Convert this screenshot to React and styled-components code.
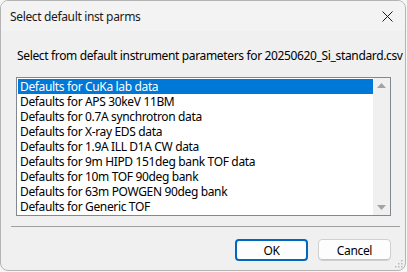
import React from "react";
import styled, { createGlobalStyle } from "styled-components";

const Global = createGlobalStyle`
  html, body { margin: 0; padding: 0; background: #f6f6f6; }
  body { font-family: "Segoe UI", "Noto Sans", "Open Sans", sans-serif; letter-spacing: -0.35px; }
`;

const Window = styled.div`
  box-sizing: border-box;
  width: 406px;
  height: 271px;
  border: 1px solid #b4b4b4;
  border-radius: 8px;
  overflow: hidden;
  background: #f0f0f0;
  display: flex;
  flex-direction: column;
  position: relative;
`;

const TitleBar = styled.div`
  height: 30px;
  flex: none;
  background: #f3f3f3;
  display: flex;
  align-items: center;
  justify-content: space-between;
  padding: 0 9px 0 9px;
  font-size: 12px;
  color: #1a1a1a;
`;

const Close = styled.div`
  width: 14px;
  height: 14px;
  display: flex;
  align-items: center;
  justify-content: center;
  margin-right: 2px;
`;

const Body = styled.div`
  flex: 1;
  display: flex;
  flex-direction: column;
  padding: 0 14px 0 15px;
`;

const Label = styled.div`
  margin-top: 17px;
  line-height: 16px;
  height: 16px;
  font-size: 12px;
  color: #000;
  padding-left: 1px;
  white-space: nowrap;
`;

const ListBox = styled.div`
  margin-top: 13px;
  box-sizing: border-box;
  height: 139px;
  border: 1px solid #828790;
  background: #fff;
  display: flex;
`;

const Rows = styled.div`
  flex: 1;
  padding: 1px 0 1px 1px;
  display: flex;
  flex-direction: column;
`;

const Row = styled.div`
  height: 15px;
  line-height: 15px;
  font-size: 12px;
  padding-left: 2px;
  white-space: nowrap;
  overflow: hidden;
  background: ${(p) => (p.$selected ? "#0078d7" : "transparent")};
  color: ${(p) => (p.$selected ? "#fff" : "#000")};
`;

const ScrollBar = styled.div`
  width: 17px;
  background: #f0f0f0;
  display: flex;
  flex-direction: column;
  justify-content: space-between;
  align-items: center;
  padding: 5px 0;
  box-sizing: border-box;
`;

const Separator = styled.div`
  height: 1px;
  background: #a0a0a0;
  margin: 10px -9px 0 -5px;
`;

const ButtonRow = styled.div`
  display: flex;
  justify-content: flex-end;
  gap: 10px;
  margin-top: 12px;
`;

const Button = styled.button`
  box-sizing: border-box;
  width: 73px;
  height: 22px;
  font-family: inherit;
  letter-spacing: inherit;
  font-size: 12px;
  color: #000;
  background: #fdfdfd;
  border-radius: 4px;
  padding: 0;
  border: ${(p) => (p.$default ? "2px solid #0067c0" : "1px solid #d0d0d0")};
  box-shadow: ${(p) => (p.$default ? "none" : "inset 0 -1px 0 #c4c4c4")};
`;

const Grip = styled.svg`
  position: absolute;
  right: 2px;
  bottom: 2px;
`;

const items = [
  "Defaults for CuKa lab data",
  "Defaults for APS 30keV 11BM",
  "Defaults for 0.7A synchrotron data",
  "Defaults for X-ray EDS data",
  "Defaults for 1.9A ILL D1A CW data",
  "Defaults for 9m HIPD 151deg bank TOF data",
  "Defaults for 10m TOF 90deg bank",
  "Defaults for 63m POWGEN 90deg bank",
  "Defaults for Generic TOF",
];

export default function App() {
  return (
    <>
      <Global />
      <Window>
        <TitleBar>
          <span>Select default inst parms</span>
          <Close>
            <svg width="11" height="11" viewBox="0 0 11 11">
              <path d="M0.5 0.5 L10.5 10.5 M10.5 0.5 L0.5 10.5" stroke="#1a1a1a" strokeWidth="1" />
            </svg>
          </Close>
        </TitleBar>
        <Body>
          <Label>Select from default instrument parameters for 20250620_Si_standard.csv</Label>
          <ListBox>
            <Rows>
              {items.map((t, i) => (
                <Row key={t} $selected={i === 0}>{t}</Row>
              ))}
            </Rows>
            <ScrollBar>
              <svg width="9" height="5" viewBox="0 0 9 5">
                <path d="M0 5 L4.5 0 L9 5 Z" fill="#a3a3a3" />
              </svg>
              <svg width="9" height="5" viewBox="0 0 9 5">
                <path d="M0 0 L9 0 L4.5 5 Z" fill="#a3a3a3" />
              </svg>
            </ScrollBar>
          </ListBox>
          <Separator />
          <ButtonRow>
            <Button $default>OK</Button>
            <Button>Cancel</Button>
          </ButtonRow>
        </Body>
        <Grip width="10" height="10" viewBox="0 0 10 10">
          {[[8, 2], [8, 5], [5, 5], [8, 8], [5, 8], [2, 8]].map(([x, y], i) => (
            <rect key={i} x={x} y={y} width="1.5" height="1.5" fill="#b8b8b8" />
          ))}
        </Grip>
      </Window>
    </>
  );
}
